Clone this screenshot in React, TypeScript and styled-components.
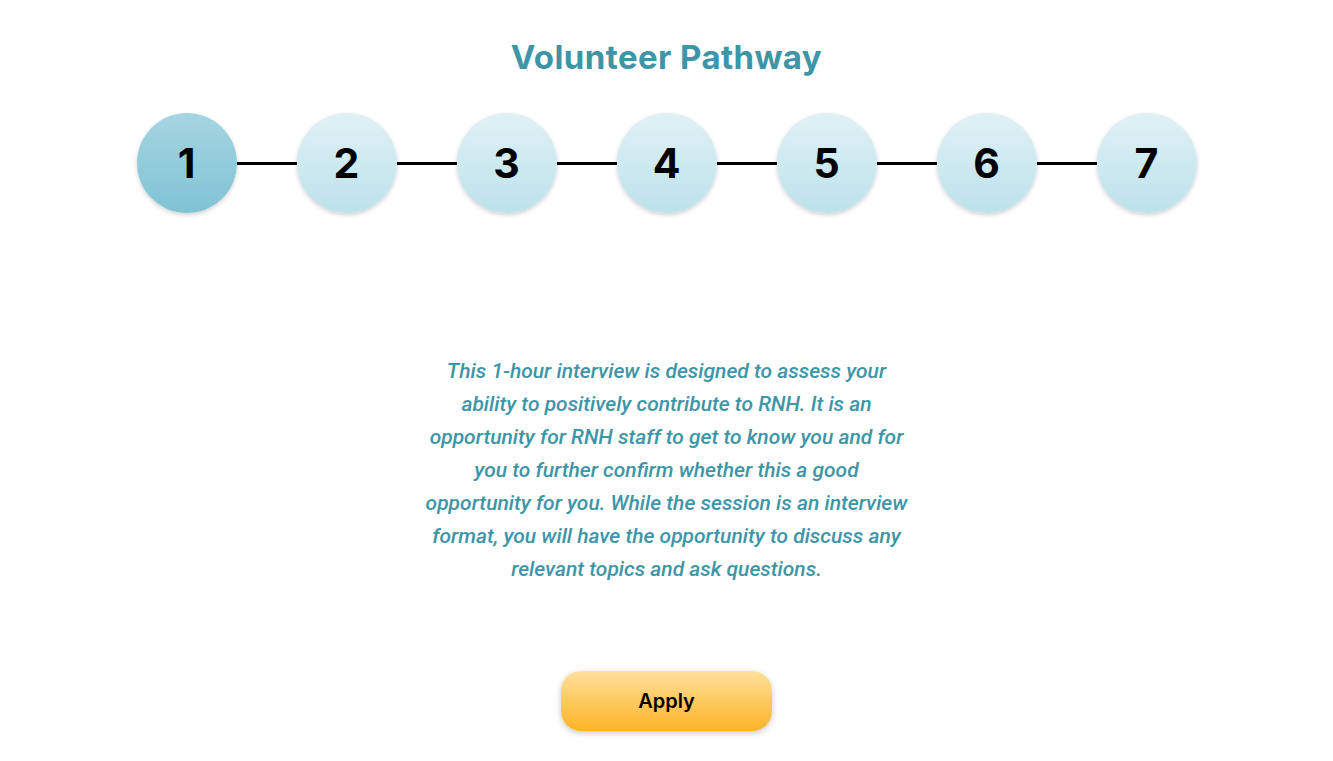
import React from "react";
import styled, { createGlobalStyle } from "styled-components";

const Global = createGlobalStyle`
  html, body { margin: 0; padding: 0; background: #ffffff; }
  body { font-family: "Inter", "Liberation Sans", sans-serif; }
`;

const Page = styled.main`
  display: flex;
  flex-direction: column;
  align-items: center;
  width: 1333px;
  min-height: 761px;
`;

const Title = styled.h1`
  margin: 36px 0 0;
  font-family: "Inter", sans-serif;
  font-weight: 700;
  font-size: 33px;
  line-height: 42px;
  color: #3e95a7;
  letter-spacing: 0.4px;
`;

const Stepper = styled.ol`
  display: flex;
  align-items: center;
  list-style: none;
  margin: 35px 0 0;
  padding: 0;
`;

const Step = styled.li<{ $active?: boolean }>`
  width: 100px;
  height: 100px;
  border-radius: 50%;
  display: flex;
  align-items: center;
  justify-content: center;
  font-family: "Inter", sans-serif;
  font-weight: 700;
  font-size: 41px;
  color: #000;
  background: ${(p) =>
    p.$active
      ? "linear-gradient(180deg, #a6d5e1 0%, #7fc3d4 100%)"
      : "linear-gradient(180deg, #e0f1f6 0%, #bce2eb 100%)"};
  box-shadow: 0 2px 4px rgba(0, 0, 0, 0.18);
  flex-shrink: 0;
`;

const Connector = styled.li`
  width: 60px;
  height: 3px;
  background: #000;
  flex-shrink: 0;
`;

const Description = styled.p`
  margin: 142px 0 0;
  width: 492px;
  text-align: center;
  font-family: "Roboto", sans-serif;
  font-style: italic;
  font-weight: 500;
  font-size: 21px;
  line-height: 33px;
  color: #3e95a7;
`;

const ApplyButton = styled.button`
  margin-top: 85px;
  width: 211px;
  height: 60px;
  border: none;
  border-radius: 20px;
  background: linear-gradient(180deg, #ffe09c 0%, #fdb424 100%);
  box-shadow: 0 2px 6px rgba(0, 0, 0, 0.22);
  font-family: "Inter", sans-serif;
  font-weight: 600;
  font-size: 20px;
  color: #000;
  cursor: pointer;
`;

const steps = [1, 2, 3, 4, 5, 6, 7];

export default function App() {
  return (
    <>
      <Global />
      <Page>
        <Title>Volunteer Pathway</Title>
        <Stepper>
          {steps.map((n, i) => (
            <React.Fragment key={n}>
              {i > 0 && <Connector />}
              <Step $active={n === 1}>{n}</Step>
            </React.Fragment>
          ))}
        </Stepper>
        <Description>
          This 1-hour interview is designed to assess your ability to positively
          contribute to RNH. It is an opportunity for RNH staff to get to know
          you and for you to further confirm whether this a good opportunity for
          you. While the session is an interview format, you will have the
          opportunity to discuss any relevant topics and ask questions.
        </Description>
        <ApplyButton>Apply</ApplyButton>
      </Page>
    </>
  );
}
